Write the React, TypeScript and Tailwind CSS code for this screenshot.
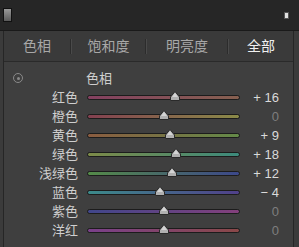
import React from "react";

const rows = [
  { label: "红色", value: "+ 16", pos: 57.5, from: "#844060", to: "#866050", zero: false },
  { label: "橙色", value: "0", pos: 50, from: "#844050", to: "#8a8a48", zero: true },
  { label: "黄色", value: "+ 9", pos: 54, from: "#8a5c40", to: "#648a48", zero: false },
  { label: "绿色", value: "+ 18", pos: 58, from: "#7c8a48", to: "#3c8a7c", zero: false },
  { label: "浅绿色", value: "+ 12", pos: 55.5, from: "#548a48", to: "#3c488a", zero: false },
  { label: "蓝色", value: "− 4", pos: 48, from: "#3c8a8a", to: "#50408a", zero: false },
  { label: "紫色", value: "0", pos: 50, from: "#40468a", to: "#84407c", zero: true },
  { label: "洋红", value: "0", pos: 50, from: "#7a408a", to: "#8a4848", zero: true },
];

const tabs = [
  { t: "色相", w: "w-[66px]" },
  { t: "饱和度", w: "w-[75px]" },
  { t: "明亮度", w: "w-[82px]" },
  { t: "全部", w: "flex-1" },
];

function Thumb() {
  return (
    <svg width="11" height="10" viewBox="0 0 11 10" className="block">
      <path d="M5.5 0.5 L10 6 L10 9.5 L1 9.5 L1 6 Z" fill="#b0b0b0" stroke="#2a2a2a" strokeWidth="1" />
      <path d="M5.5 2 L8.5 6 L2.5 6 Z" fill="#d4d4d4" />
    </svg>
  );
}

function SliderRow({ row }: { row: (typeof rows)[number] }) {
  return (
    <div className="flex items-center h-[19px]">
      <div className="w-[74px] text-right text-[13px] text-[#cfcfcf] leading-none">{row.label}</div>
      <div className="relative ml-[9px] w-[153px] h-[5px]">
        <div
          className="absolute inset-0 rounded-full border border-[#1c1c1c]"
          style={{ background: `linear-gradient(to right, ${row.from}, ${row.to})` }}
        />
        <div className="absolute top-[-4px] -translate-x-1/2" style={{ left: `${row.pos}%` }}>
          <Thumb />
        </div>
      </div>
      <div
        className={
          "w-[39px] text-right text-[13px] leading-none " + (row.zero ? "text-[#7e7e7e]" : "text-[#dadada]")
        }
      >
        {row.value}
      </div>
    </div>
  );
}

export default function App() {
  return (
    <div
      className="w-[299px] h-[247px] bg-[#3b3b3b] overflow-hidden flex flex-col"
      style={{ fontFamily: '"Liberation Sans", "Noto Sans CJK SC", sans-serif' }}
    >
      <div className="h-[31px] bg-[#262626] border-b border-[#1a1a1a] flex items-center justify-between pl-[3px] pr-[10px]">
        <div className="w-[9px] h-[14px] border border-[#111] bg-gradient-to-b from-[#9a9a9a] to-[#5a5a5a]" />
        <div className="w-[5px] h-[7px] bg-[#e0e0e0] border border-[#555]" />
      </div>
      <div className="flex-1 flex flex-col ml-[3px] mr-[5px] border-x border-[#262626]">
        <div className="h-[31px] bg-[#3a3a3a] border-b border-[#2a2a2a] flex items-center text-[14px]">
          {tabs.map((tab, i) => (
            <div key={tab.t} className={tab.w + " flex items-center"}>
              {i > 0 && <div className="w-[2px] h-[15px] bg-[#2c2c2c] border-r border-[#4a4a4a]" />}
              <div className={"flex-1 text-center " + (i === 3 ? "text-[#f0f0f0]" : "text-[#a8a8a8]")}>
                {tab.t}
              </div>
            </div>
          ))}
        </div>
        <div className="flex-1 bg-[#3f3f3f] pt-[7px]">
          <div className="flex items-center h-[19px] relative">
            <div className="absolute left-[9px] top-[4px] w-[10px] h-[10px] rounded-full border border-[#8a8a8a] flex items-center justify-center">
              <div className="w-[3px] h-[3px] rounded-full bg-[#8a8a8a]" />
            </div>
            <div className="pl-[82px] text-[13px] text-[#cfcfcf]">色相</div>
          </div>
          {rows.map((r) => (
            <SliderRow key={r.label} row={r} />
          ))}
        </div>
      </div>
    </div>
  );
}
